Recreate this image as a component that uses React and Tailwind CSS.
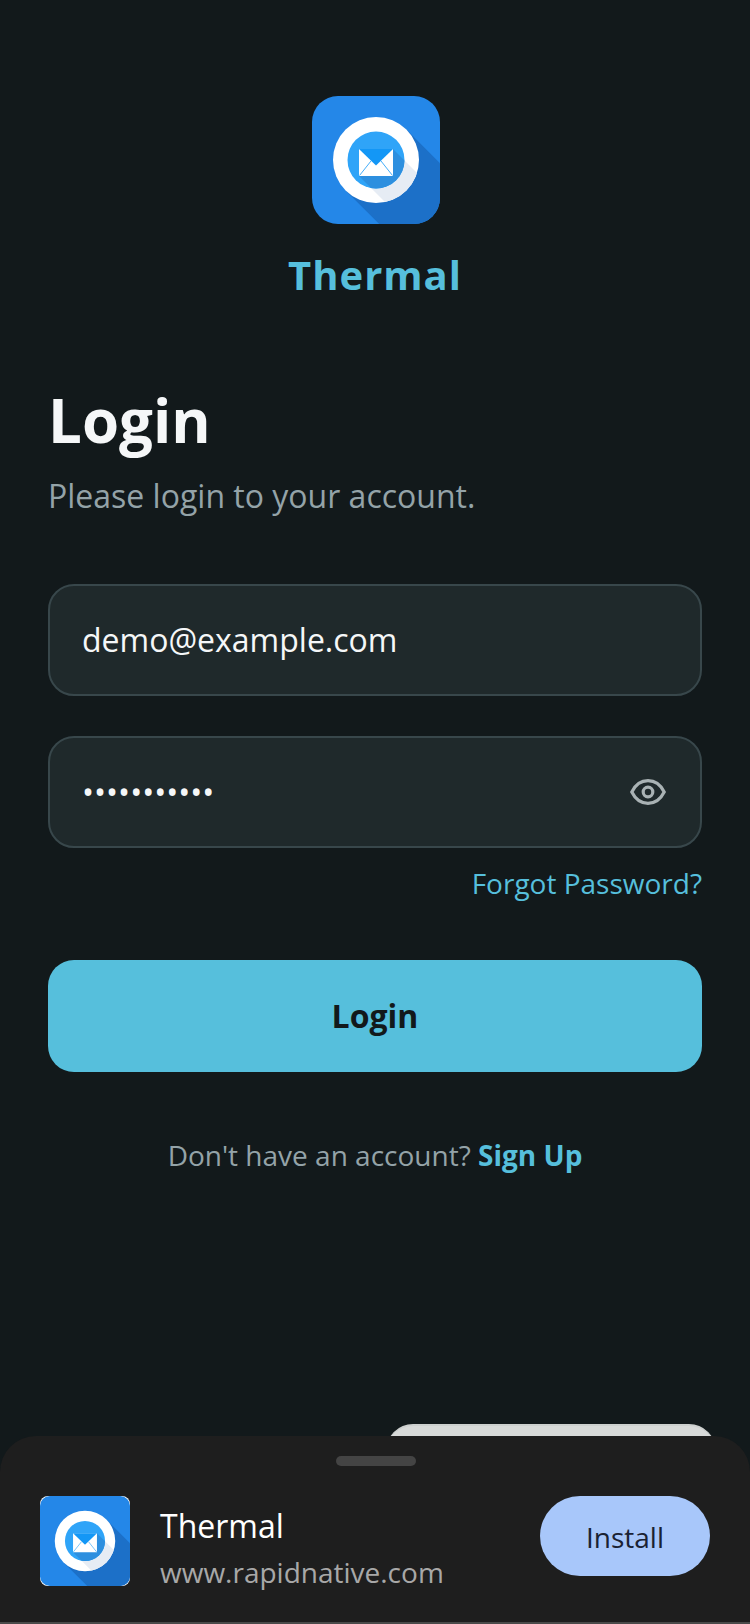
import React from 'react';

const font = { fontFamily: '"Open Sans", sans-serif' };

function ThermalLogo({ id, rx, className }) {
  return (
    <svg viewBox="0 0 128 128" className={className}>
      <defs>
        <clipPath id={id + '-tile'}>
          <rect width="128" height="128" rx={rx} />
        </clipPath>
        <clipPath id={id + '-ring'}>
          <circle cx="64" cy="64" r="43" />
        </clipPath>
        <clipPath id={id + '-inner'}>
          <circle cx="64" cy="64" r="28.5" />
        </clipPath>
      </defs>
      <g clipPath={`url(#${id}-tile)`}>
        <rect width="128" height="128" fill="#2487E8" />
        {/* long shadow of the ring */}
        <path d="M94.4 33.6 L160 99.2 L99.2 160 L33.6 94.4 Z" fill="#1C70C8" />
        <circle cx="64" cy="64" r="43" fill="#fff" />
        {/* the envelope's shadow runs on across the inner circle and the ring */}
        <g clipPath={`url(#${id}-ring)`}>
          <path d="M81 53 L130 102 L97 130 L47 80 Z" fill="#E6ECF4" />
        </g>
        <circle cx="64" cy="64" r="28.5" fill="#2FA4F8" />
        <g clipPath={`url(#${id}-inner)`}>
          <path d="M81 53 L130 102 L97 130 L47 80 Z" fill="#2D8FDF" />
        </g>
        <rect x="47" y="53" width="34" height="27" fill="#fff" />
        <path d="M47 53 L81 53 L64 69.5 Z" fill="#1397F6" />
        <path d="M47.5 79.5 L59 65 M80.5 79.5 L69 65" stroke="#2FA4F8" strokeWidth="0.9" fill="none" />
      </g>
    </svg>
  );
}

function EyeIcon() {
  return (
    <svg viewBox="0 0 36 26" fill="none" stroke="#A9B2B4" strokeWidth="3.2" className="w-[36px] h-[26px]">
      <path d="M1.8 13 C5.5 5.6 11 1.7 18 1.7 C25 1.7 30.5 5.6 34.2 13 C30.5 20.4 25 24.3 18 24.3 C11 24.3 5.5 20.4 1.8 13 Z" />
      <circle cx="18" cy="13" r="4.8" />
    </svg>
  );
}

export default function App() {
  return (
    <div className="relative h-[1624px] w-[750px] overflow-hidden bg-[#12191B]" style={font}>
      <div className="flex flex-col px-[48px] pt-[96px]">
        <div className="flex flex-col items-center">
          <ThermalLogo id="big" rx={26} className="ml-[2px] w-[128px] h-[128px]" />
          <h1 className="mt-[24px] text-[40px] leading-[54px] font-bold tracking-[1px] text-[#56BFDC]">Thermal</h1>
        </div>

        <h2 className="mt-[77px] text-[60px] leading-[82px] font-bold text-[#F5F7F8]">Login</h2>
        <p className="mt-[13px] text-[32px] leading-[44px] text-[#94A3A8]">Please login to your account.</p>

        <div className="mt-[66px] flex h-[112px] items-center rounded-[26px] border-2 border-[#38474B] bg-[#1F292B] px-[32px]">
          <span className="text-[32px] text-[#F5F7F8]">demo@example.com</span>
        </div>

        <div className="mt-[40px] flex h-[112px] items-center justify-between rounded-[26px] border-2 border-[#38474B] bg-[#1F292B] pl-[32px] pr-[34px]">
          <span className="text-[32px] text-[#F5F7F8]">•••••••••••</span>
          <EyeIcon />
        </div>

        <div className="mt-[16px] flex justify-end">
          <span className="text-[28px] leading-[38px] text-[#56BFDC]">Forgot Password?</span>
        </div>

        <div className="mt-[58px] flex h-[112px] items-center justify-center rounded-[26px] bg-[#56BFDC]">
          <span className="text-[32px] font-bold text-[#12191B]">Login</span>
        </div>

        <p className="mt-[64px] text-center text-[28px] leading-[38px] text-[#94A3A8]">
          Don't have an account? <span className="font-bold text-[#56BFDC]">Sign Up</span>
        </p>
      </div>

      <div className="absolute left-[386px] top-[1424px] h-[60px] w-[330px] rounded-t-[27px] border-t-2 border-[#CDD0CF] bg-[#D8DAD9]" />

      <div className="absolute inset-x-0 top-[1436px] h-[186px] rounded-t-[36px] bg-[#1E1E1E]">
        <div className="ml-[336px] mt-[20px] h-[10px] w-[80px] rounded-full bg-[#444444]" />
        <div className="mt-[30px] flex items-start pl-[40px] pr-[40px]">
          <div className="h-[90px] w-[90px] overflow-hidden rounded-[8px] bg-white">
            <ThermalLogo id="small" rx={14} className="w-[90px] h-[90px]" />
          </div>
          <div className="ml-[30px] mt-[8px] flex flex-col">
            <span className="text-[32px] leading-[44px] text-white">Thermal</span>
            <span className="mt-[2px] text-[28px] leading-[44px] text-[#A8A8A8]">www.rapidnative.com</span>
          </div>
          <div className="ml-auto flex h-[80px] w-[170px] items-center justify-center rounded-full bg-[#A8C7FA] pt-[2px]">
            <span className="text-[28px] text-[#1A2233]">Install</span>
          </div>
        </div>
      </div>
      <div className="absolute inset-x-0 top-[1622px] h-[2px] bg-[#4A4A4A]" />
    </div>
  );
}
